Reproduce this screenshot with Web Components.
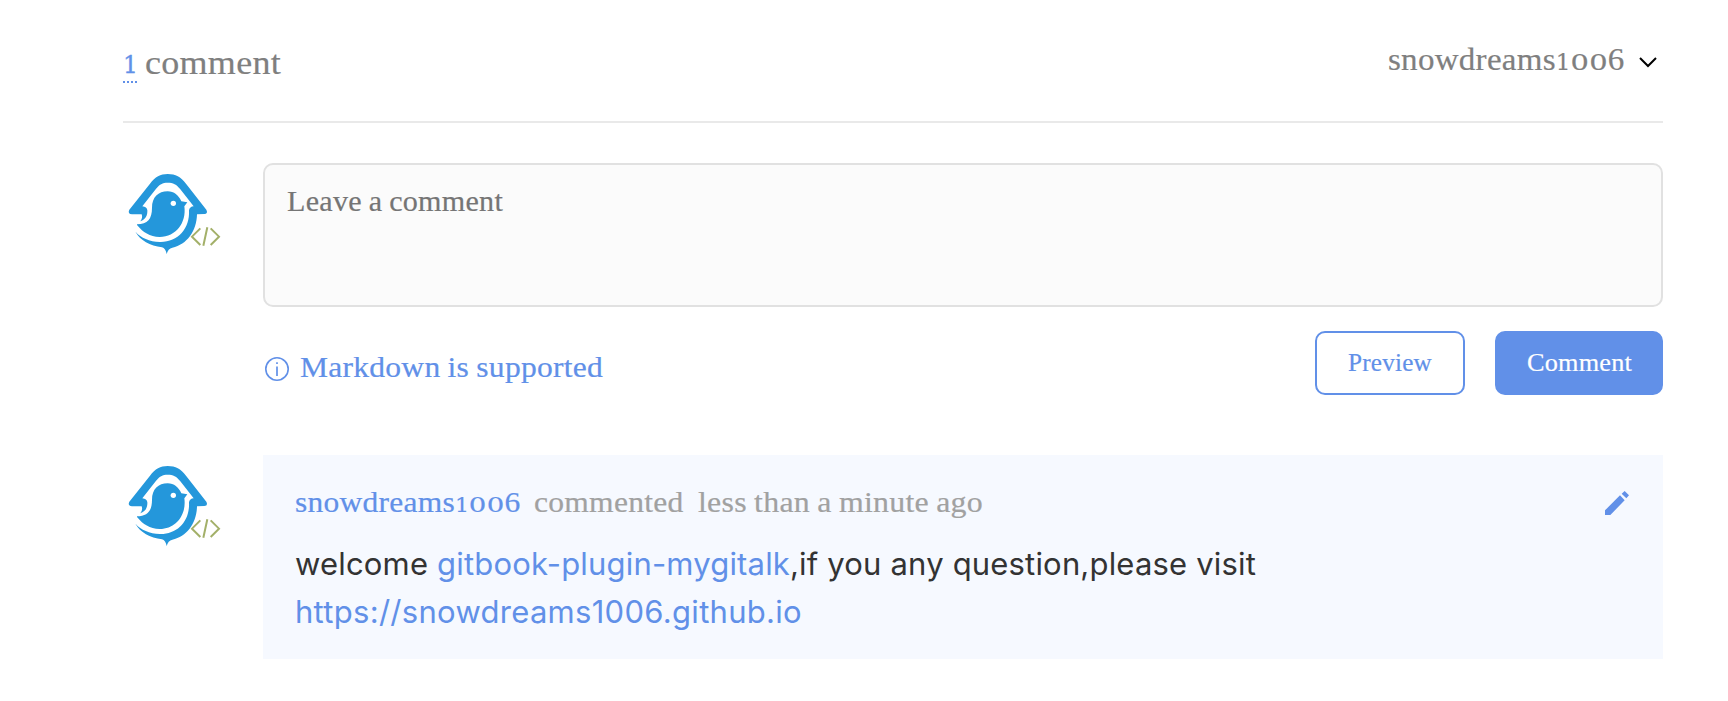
<!DOCTYPE html>
<html lang="en">
<head>
<meta charset="utf-8">
<title>Comments</title>
<style>
html, body { margin: 0; background: #fff; }
</style>
</head>
<body>
<comment-thread></comment-thread>
<script>
const define = (name, html, connected) => {
  const t = document.createElement('template');
  t.innerHTML = html;
  customElements.define(name, class extends HTMLElement {
    connectedCallback() {
      if (this.shadowRoot) return;
      this.attachShadow({ mode: 'open' }).append(t.content.cloneNode(true));
      if (connected) connected.call(this);
    }
  });
};

// Old-style figures: lowered to x-height
define('old-num', `<style>
:host { font-family: "DejaVu Serif", serif; font-size: .7em; line-height: 0; }
:host([wide]) { display: inline-block; transform: scaleX(1.25); margin: 0 .15em; }
</style><slot></slot>`);

// A run of text set to the measure given in its "w" attribute:
// widened letterforms by default, tracked out with the "track" attribute
define('text-run', `<style>
:host { display: inline-block; white-space: pre; transform-origin: 0 50%; -webkit-text-stroke: .2px currentColor; letter-spacing: .008em; word-spacing: -.03em; }
:host([track]) { -webkit-text-stroke: 0; letter-spacing: 0; word-spacing: 0; }
</style><slot></slot>`, function () {
  const w = +this.getAttribute('w');
  const natural = this.getBoundingClientRect().width;
  if (this.hasAttribute('track')) {
    this.style.letterSpacing = ((w - natural) / this.textContent.length).toFixed(3) + 'px';
  } else {
    this.style.transform = `scaleX(${w / natural})`;
    this.style.marginRight = (w - natural) + 'px';
  }
});

define('user-avatar', `<style>
:host { display: block; width: 100px; height: 100px; flex: none; }
svg { display: block; }
</style>
<svg width="100" height="100" viewBox="24 9 300 300">
<path fill="#2497db" d="M51 163Q37 161 43 149L105 71C121 50 136 42 158 42C182 42 197 50 213 71L274 149Q280 161 268 162L246 163C245 213 216 254 172 263Q159 266 155 282Q152 265 141 262C105 257 75 241 62 216L90 215L76 184Q84 174 80 163Z"/>
<path fill="#fff" d="M82 139L122 88C133 73 143 68 158 68C174 68 185 73 196 88L236 139Q224 140 222 151C225 207 188 247 135 246C103 245 78 234 62 216L55 200L66 187L76 184C92 178 98 166 97 151Q96 141 82 139Z"/>
<path fill="#2497db" d="M66 193C98 192 111 177 111 143C111 112 130 94 158 94C177 94 191 106 199 124L217 127L208 139C215 188 183 231 134 231C104 230 84 217 66 195Z"/>
<circle cx="175" cy="130" r="8" fill="#fff"/>
<path fill="none" stroke="#a3b069" stroke-width="6" d="M256 205L231 230L256 255M277 202L265 257M287 205L312 230L287 255"/>
</svg>`);

define('thread-header', `<style>
:host { display: flex; justify-content: space-between; height: 121px; border-bottom: 2px solid #e9e9e9; color: #7f7f7f; }
.count { font-size: 33.4px; line-height: 40px; padding-top: 43px; display: flex; }
.n { color: #6190e8; width: 14px; height: 38px; border-bottom: 2px dotted #6190e8; margin-right: 8px; }
.n old-num { line-height: 36px; -webkit-text-stroke: .3px currentColor; position: relative; top: -1px; }
.user { font-size: 31.4px; line-height: 40px; padding-top: 40px; display: flex; }
svg { margin: 15px 5px 0 14px; }
</style>
<div class="count"><span class="n"><old-num>1</old-num></span><text-run w="136">comment</text-run></div>
<div class="user"><text-run w="235">snowdreams<old-num>1</old-num><old-num wide>00</old-num>6</text-run>
<svg width="20" height="14" viewBox="0 0 20 14"><path d="M2 3L10 11L18 3" fill="none" stroke="#000" stroke-width="2"/></svg></div>`);

define('comment-box', `<style>
:host { display: block; box-sizing: border-box; height: 144px; border: 2px solid #e1e1e1; border-radius: 10px; background: #fbfbfb; padding: 16px 22px; font-size: 29.3px; line-height: 40px; color: #757575; }
</style><text-run w="216">Leave a comment</text-run>`);

define('action-button', `<style>
:host { display: flex; box-sizing: border-box; height: 64px; width: 150px; border: 2px solid #6190e8; border-radius: 10px; color: #6190e8; justify-content: center; font-size: 25px; line-height: 28px; padding-top: 16px; }
:host([primary]) { width: 168px; background: #6190e8; color: #fff; }
</style><slot></slot>`);

define('markdown-hint', `<style>
:host { display: flex; color: #6190e8; font-size: 30px; line-height: 40px; padding-top: 16px; }
svg { margin: 9px 10px 0 1px; }
</style>
<svg width="26" height="26" viewBox="0 0 26 26"><circle cx="13" cy="13" r="11.2" fill="none" stroke="#6190e8" stroke-width="1.6"/><path d="M13 10.5V20M13 6.2V8" stroke="#6190e8" stroke-width="1.7"/></svg>
<text-run w="303">Markdown is supported</text-run>`);

define('comment-card', `<style>
:host { display: block; box-sizing: border-box; height: 204px; background: #f6f9ff; padding: 27px 32px 0; }
.meta { display: flex; font-size: 30px; line-height: 40px; color: #a1a1a1; }
.name, a { color: #6190e8; text-decoration: none; }
.act { margin-left: 14px; }
svg { margin: 9px 2px 0 auto; }
.body { margin-top: 18px; font: 31px/48px Inter, "Liberation Sans", sans-serif; color: #333; }
.body div { height: 48px; }
</style>
<div class="meta"><text-run class="name" w="224">snowdreams<old-num>1</old-num><old-num wide>00</old-num>6</text-run><span class="act"><text-run w="149.5">commented</text-run></span><span class="act"><text-run w="285">less than a minute ago</text-run></span>
<svg width="24" height="24" viewBox="135 123 72 72"><path fill="#6190e8" d="M135 181V195H151L194 151L180 136ZM185 131L194 123L207 136L199 145Z"/></svg></div>
<div class="body"><div><text-run track w="961">welcome <a href="#">gitbook-plugin-mygitalk</a>,if you any question,please visit</text-run></div><div><a href="#"><text-run track w="507">https://snowdreams1006.github.io</text-run></a></div></div>`);

define('comment-thread', `<style>
:host { display: block; box-sizing: border-box; height: 701px; padding: 0 65px 0 123px; font-family: "Liberation Serif", serif; }
.row { display: flex; gap: 40px; margin-top: 40px; }
.main { flex: 1; }
.bar { display: flex; margin-top: 24px; }
markdown-hint { margin-right: auto; }
.bar action-button[primary] { margin-left: 30px; }
.second { margin-top: 60px; }
</style>
<thread-header></thread-header>
<div class="row"><user-avatar></user-avatar><div class="main"><comment-box></comment-box>
<div class="bar"><markdown-hint></markdown-hint><action-button><text-run w="84">Preview</text-run></action-button><action-button primary><text-run w="105">Comment</text-run></action-button></div></div></div>
<div class="row second"><user-avatar></user-avatar><div class="main"><comment-card></comment-card></div></div>`);
</script>
</body>
</html>
